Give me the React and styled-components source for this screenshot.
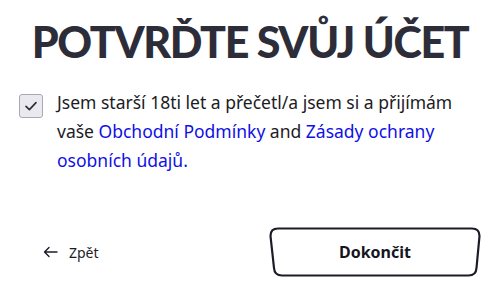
import React, { useState } from "react";
import styled, { createGlobalStyle } from "styled-components";

const GlobalStyle = createGlobalStyle`
  body {
    margin: 0;
    background: #ffffff;
    font-family: "Noto Sans", Lato, sans-serif;
  }
`;

function App() {
  const [checked, setChecked] = useState(true);

  return (
    <Page>
      <GlobalStyle />
      <Title>POTVRĎTE SVŮJ ÚČET</Title>

      <ConsentRow>
        <CheckBox
          type="button"
          aria-pressed={checked}
          onClick={() => setChecked(!checked)}
        >
          {checked && (
            <svg width="16" height="16" viewBox="0 0 16 16">
              <path
                d="M3 8.4 L6.4 11.6 L13 4.6"
                fill="none"
                stroke="#2b2b36"
                strokeWidth="1.6"
                strokeLinecap="round"
                strokeLinejoin="round"
              />
            </svg>
          )}
        </CheckBox>
        <ConsentText>
          Jsem starší 18ti let a přečetl/a jsem si a přijímám vaše{" "}
          <TextLink href="#">Obchodní Podmínky</TextLink> and{" "}
          <TextLink href="#">Zásady ochrany osobních údajů.</TextLink>
        </ConsentText>
      </ConsentRow>

      <Footer>
        <BackLink href="#">
          <svg width="15" height="12" viewBox="0 0 15 12">
            <path
              d="M14 6 H1.5 M6 1.5 L1.5 6 L6 10.5"
              fill="none"
              stroke="#1c1c28"
              strokeWidth="1.4"
              strokeLinecap="round"
              strokeLinejoin="round"
            />
          </svg>
          Zpět
        </BackLink>
        <FinishButton type="button">
          <ButtonFrame viewBox="0 0 212 50" preserveAspectRatio="none">
            <path
              d="M9 1.5 H203 Q210.5 1.5 210.5 9 L207.5 41 Q207 48.5 199.5 48.5 H13 Q5.5 48.5 5 41 L1.5 9 Q1.5 1.5 9 1.5 Z"
              fill="#ffffff"
              stroke="#1c1c28"
              strokeWidth="2.2"
            />
          </ButtonFrame>
          <ButtonLabel>Dokončit</ButtonLabel>
        </FinishButton>
      </Footer>
    </Page>
  );
}

export default App;

const Page = styled.div`
  width: 501px;
  height: 298px;
  box-sizing: border-box;
  padding: 14px 20px 0 19px;
  display: flex;
  flex-direction: column;
`;

const Title = styled.h1`
  margin: 0;
  text-align: center;
  font-family: Lato, sans-serif;
  font-weight: 900;
  font-size: 43px;
  line-height: 56px;
  letter-spacing: -1.4px;
  color: #2d2d3a;
  white-space: nowrap;
`;

const ConsentRow = styled.div`
  display: flex;
  align-items: flex-start;
  gap: 14px;
  margin-top: 18px;
`;

const CheckBox = styled.button`
  flex: none;
  width: 24px;
  height: 24px;
  margin-top: 6px;
  padding: 0;
  display: flex;
  align-items: center;
  justify-content: center;
  background: #e9e9ef;
  border: 1px solid #a9a9b4;
  border-radius: 3px;
  cursor: pointer;
`;

const ConsentText = styled.p`
  margin: 0;
  max-width: 415px;
  font-size: 17.5px;
  line-height: 29px;
  color: #1c1c24;
`;

const TextLink = styled.a`
  color: #1010e6;
  text-decoration: none;
`;

const Footer = styled.div`
  display: flex;
  align-items: center;
  justify-content: space-between;
  margin-top: 52px;
  padding-left: 24px;
`;

const BackLink = styled.a`
  display: flex;
  align-items: center;
  gap: 11px;
  font-size: 14px;
  color: #1c1c28;
  text-decoration: none;
`;

const FinishButton = styled.button`
  position: relative;
  width: 212px;
  height: 50px;
  padding: 0;
  border: none;
  background: transparent;
  cursor: pointer;
  display: flex;
  align-items: center;
  justify-content: center;
`;

const ButtonFrame = styled.svg`
  position: absolute;
  inset: 0;
  width: 100%;
  height: 100%;
`;

const ButtonLabel = styled.span`
  position: relative;
  font-family: "Noto Sans", sans-serif;
  font-weight: 700;
  font-size: 16px;
  color: #161622;
`;
